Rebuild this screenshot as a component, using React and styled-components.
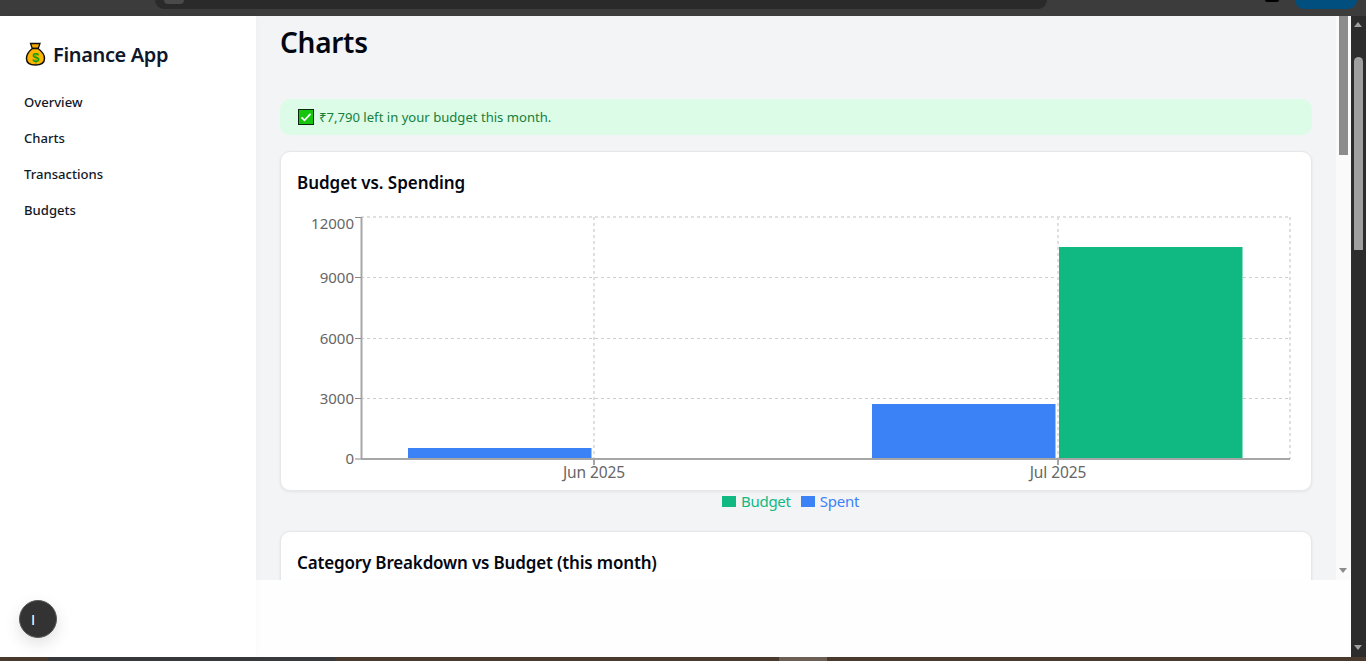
import React from "react";
import styled, { createGlobalStyle } from "styled-components";

const Global = createGlobalStyle`
  html, body { margin: 0; padding: 0; height: 100%; overflow: hidden; background: #fff; }
  body { font-family: "Noto Sans", "Open Sans", "Liberation Sans", sans-serif; color: #111827; }
  * { box-sizing: border-box; }
`;

const Shell = styled.div`
  width: 1366px; height: 661px; display: flex; flex-direction: column; overflow: hidden;
`;
const BrowserBar = styled.div`
  height: 16px; flex: none; background: #3c3c3c; display: flex; align-items: flex-start; overflow: hidden;
`;
const AddressPill = styled.div`
  width: 892px; height: 9px; margin-left: 155px; background: #2a2a2a; border-radius: 0 0 10px 10px;
  display: flex; align-items: flex-start; padding-left: 9px;
`;
const AddressDot = styled.div`
  width: 20px; height: 4px; background: #4a4a4a; border-radius: 0 0 10px 10px;
`;
const AvatarStub = styled.div`
  width: 14px; height: 2px; margin-left: 218px; background: #000; border-radius: 0 0 7px 7px;
`;
const ProfileStub = styled.div`
  width: 62px; height: 9px; margin-left: 16px; background: #004f7e; border-radius: 0 0 14px 14px;
`;
const Desktop = styled.div`
  flex: 1; display: flex; min-height: 0;
`;
const Page = styled.div`
  flex: 1; display: flex; min-width: 0; background: #fefefe;
`;
const Sidebar = styled.aside`
  position: relative; width: 256px; flex: none; background: #fff; padding: 24px 24px 0;
  box-shadow: 2px 0 6px rgba(0,0,0,0.02);
`;
const Brand = styled.div`
  display: flex; align-items: center; gap: 5px; height: 30px; margin-bottom: 15px; margin-top: -1px;
  font-size: 20px; font-weight: 600; color: #0f172a; letter-spacing: -0.35px;
`;
const Nav = styled.nav`
  display: flex; flex-direction: column;
`;
const NavItem = styled.a`
  height: 36px; display: flex; align-items: center; font-size: 13.1px; font-weight: 500; color: #111827;
`;
const AvatarBtn = styled.button`
  position: absolute; left: 19px; bottom: 19px; width: 38px; height: 38px; border-radius: 50%;
  background: #333; border: 1px solid #5a5a5a; color: #fff; font: 400 15px "Liberation Sans", sans-serif;
  padding: 0 0 0 11px; text-align: left;
  box-shadow: 0 6px 16px rgba(0,0,0,0.12);
`;
const RightColumn = styled.div`
  flex: 1; display: flex; flex-direction: column; min-width: 0;
`;
const Viewport = styled.div`
  height: 564px; display: flex; overflow: hidden; flex: none;
`;
const Main = styled.main`
  flex: 1; background: #f3f4f6; padding: 7px 24px 0; min-width: 0; overflow: hidden;
`;
const Title = styled.h1`
  margin: 0 0 38px; font-size: 28px; line-height: 38px; font-weight: 600; color: #030712; letter-spacing: -0.3px;
`;
const Alert = styled.div`
  height: 36px; margin-bottom: 16px; background: #dcfce7; border-radius: 10px; padding: 0 18px;
  display: flex; align-items: center; gap: 5px; font-size: 13.1px; color: #15803d;
`;
const Card = styled.section`
  height: ${(p) => p.$height}px; margin: 0 0 40px; background: #fff; border: 1px solid #e5e7eb; border-radius: 10px;
  padding: 17px 16px; box-shadow: 0 1px 3px rgba(0,0,0,0.07);
`;
const CardTitle = styled.h2`
  margin: 0 0 ${(p) => p.$gap || 0}px; font-size: 17px; line-height: 28px; font-weight: 600; color: #030712;
  letter-spacing: ${(p) => p.$tracking}px;
`;
const ChartSvg = styled.svg`
  display: block; width: 998px; height: 284px; overflow: visible;
`;
const Legend = styled.ul`
  list-style: none; margin: -1px 0 0; padding: 0 11px 0 0; display: flex; justify-content: center; gap: 10px; height: 20px;
`;
const LegendItem = styled.li`
  display: flex; align-items: center; gap: 5px; font-size: 15px; letter-spacing: -0.25px; color: ${(p) => p.$color};
`;
const Swatch = styled.span`
  width: 14px; height: 11px; background: ${(p) => p.$color};
`;
const InnerScroll = styled.div`
  width: 15px; flex: none; background: #fafafa; position: relative; padding: 0 3px;
`;
const InnerThumb = styled.div`
  width: 9px; height: 139px; background: #8c8c8c;
`;
const ArrowDown = styled.div`
  position: absolute; left: 3px; bottom: 7px; width: 0; height: 0;
  border-left: 4.5px solid transparent; border-right: 4.5px solid transparent; border-top: 5px solid ${(p) => p.$color};
`;
const OuterScroll = styled.div`
  width: 15px; flex: none; background: #2c2c2c; position: relative; padding: 41px 3px 0;
`;
const ArrowUp = styled.div`
  position: absolute; left: 3px; top: 6px; width: 0; height: 0;
  border-left: 4.5px solid transparent; border-right: 4.5px solid transparent; border-bottom: 5px solid #a0a0a0;
`;
const OuterThumb = styled.div`
  width: 9px; height: 193px; background: #9f9f9f; border-radius: 5px 5px 0 0;
`;
const TaskStrip = styled.div`
  height: 4px; flex: none; background: #4a3a2e; display: flex;
`;
const StripDark = styled.div`
  width: 287px; margin-left: 48px; background: #38393a;
`;
const StripLight = styled.div`
  width: 48px; margin-left: 444px; background: #6b5e54;
`;

const MoneyBag = () => (
  <svg width="24" height="24" viewBox="0 0 24 24" style={{ flex: "none" }}>
    <path d="M6.500 1.500h9.500l-1.800 5H8.300z" fill="#f7a900" stroke="#111" strokeWidth="1.300" />
    <path d="M8.500 6.500h5.500c3.500 2.500 6.500 6 6.500 10 0 4-3.200 6.500-9.200 6.500S2.500 20.500 2.500 16.500c0-4 2.500-7.500 6-10z" fill="#fdb400" stroke="#111" strokeWidth="1.500" />
    <text x="11.500" y="20" textAnchor="middle" fontSize="13" fontWeight="700" fill="#12a012" fontFamily="Liberation Sans, sans-serif">$</text>
  </svg>
);

const CheckBox = () => (
  <svg width="16" height="16" viewBox="0 0 16 16" style={{ flex: "none" }}>
    <rect x="0.500" y="0.500" width="15" height="15" fill="#16c60c" stroke="#0b2a0b" />
    <path d="M3.500 8.300l3 3 6-6.500" fill="none" stroke="#fff" strokeWidth="1.700" />
  </svg>
);

const axis = "#a6a6a6";
const tickY = { fontSize: 15, fill: "#666", letterSpacing: "0" };
const tickX = { fontSize: 15.500, fill: "#666", letterSpacing: "-0.1px" };

const BudgetChart = () => {
  const hLines = [277.500, 338.500, 398.500];
  const vLines = [594, 1058, 1290];
  const yTicks = [
    { label: "12000", y: 224 },
    { label: "9000", y: 277.500 },
    { label: "6000", y: 338.500 },
    { label: "3000", y: 398.500 },
    { label: "0", y: 459 },
  ];
  return (
    <ChartSvg viewBox="297 208 998 284">
      {hLines.map((y) => (
        <line key={y} x1="361" x2="1290" y1={y} y2={y} stroke="#cfcfcf" strokeDasharray="3 3" />
      ))}
      <line x1="361" x2="1290" y1="217" y2="217" stroke="#e0e0e0" strokeWidth="2" strokeDasharray="3 3" />
      {vLines.map((x) => (
        <line key={x} x1={x} x2={x} y1="217" y2="459" stroke="#e0e0e0" strokeWidth="2" strokeDasharray="3 3" />
      ))}
      <rect x="408" y="448" width="183.500" height="11" fill="#3b82f6" />
      <rect x="872" y="404" width="183.500" height="55" fill="#3b82f6" />
      <rect x="1059" y="247" width="183.500" height="212" fill="#10b981" />
      <line x1="361.500" x2="361.500" y1="217" y2="459" stroke={axis} strokeWidth="2" />
      <line x1="361" x2="1290" y1="459" y2="459" stroke={axis} strokeWidth="2" />
      {[217.500, 277.500, 338.500, 398.500, 459].map((y) => (
        <line key={y} x1="355" x2="361" y1={y} y2={y} stroke="#888" />
      ))}
      {[594, 1058].map((x) => (
        <line key={x} x1={x} x2={x} y1="459" y2="465" stroke={axis} strokeWidth="2" />
      ))}
      {yTicks.map((t) => (
        <text key={t.label} x="354" y={t.y + 5} textAnchor="end" style={tickY}>{t.label}</text>
      ))}
      <text x="594" y="478" textAnchor="middle" style={tickX}>Jun 2025</text>
      <text x="1058" y="478" textAnchor="middle" style={tickX}>Jul 2025</text>
    </ChartSvg>
  );
};

export default function App() {
  return (
    <Shell>
      <Global />
      <BrowserBar>
        <AddressPill><AddressDot /></AddressPill>
        <AvatarStub />
        <ProfileStub />
      </BrowserBar>
      <Desktop>
        <Page>
          <Sidebar>
            <Brand><MoneyBag />Finance App</Brand>
            <Nav>
              <NavItem>Overview</NavItem>
              <NavItem>Charts</NavItem>
              <NavItem>Transactions</NavItem>
              <NavItem>Budgets</NavItem>
            </Nav>
            <AvatarBtn>I</AvatarBtn>
          </Sidebar>
          <RightColumn>
            <Viewport>
              <Main>
                <Title>Charts</Title>
                <Alert><CheckBox />₹7,790 left in your budget this month.</Alert>
                <Card $height={340}>
                  <CardTitle $gap={11} $tracking={-0.05}>Budget vs. Spending</CardTitle>
                  <BudgetChart />
                  <Legend>
                    <LegendItem $color="#10b981"><Swatch $color="#10b981" />Budget</LegendItem>
                    <LegendItem $color="#3b82f6"><Swatch $color="#3b82f6" />Spent</LegendItem>
                  </Legend>
                </Card>
                <Card $height={200}>
                  <CardTitle $tracking={-0.17}>Category Breakdown vs Budget (this month)</CardTitle>
                </Card>
              </Main>
              <InnerScroll>
                <InnerThumb />
                <ArrowDown $color="#8c8c8c" />
              </InnerScroll>
            </Viewport>
          </RightColumn>
        </Page>
        <OuterScroll>
          <ArrowUp />
          <OuterThumb />
          <ArrowDown $color="#a0a0a0" />
        </OuterScroll>
      </Desktop>
      <TaskStrip>
        <StripDark />
        <StripLight />
      </TaskStrip>
    </Shell>
  );
}
